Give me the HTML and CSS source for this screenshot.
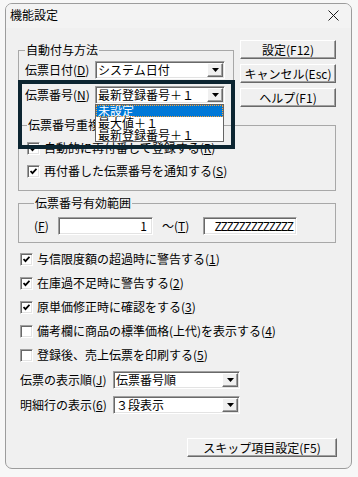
FILE: index.html
```html
<!DOCTYPE html>
<html lang="ja">
<head>
    <meta charset="utf-8">
    <title>機能設定</title>
    <link rel="stylesheet" href="styles.css">
</head>
<body>

<div class="window">
    <div class="title_bar">
        <span class="title">機能設定</span>
        <svg class="close_icon" width="11" height="11" viewBox="0 0 11 11">
            <path d="M0.5 0.5 L10.5 10.5 M10.5 0.5 L0.5 10.5" stroke="#1a1a1a" stroke-width="1" fill="none"/>
        </svg>
    </div>

    <div class="dialog">
        <div class="top_row">
            <fieldset class="group group--auto">
                <legend>自動付与方法</legend>
                <div class="field_row">
                    <span class="field_label">伝票日付(<u>D</u>)</span>
                    <div class="combo">
                        <span class="combo_text">システム日付</span>
                        <span class="combo_button"><svg width="7" height="4" viewBox="0 0 7 4"><path d="M0 0 H7 L3.5 4 Z" fill="#000"/></svg></span>
                    </div>
                </div>
                <div class="field_row">
                    <span class="field_label">伝票番号(<u>N</u>)</span>
                    <div class="combo">
                        <span class="combo_text">最新登録番号＋１</span>
                        <span class="combo_button"><svg width="7" height="4" viewBox="0 0 7 4"><path d="M0 0 H7 L3.5 4 Z" fill="#000"/></svg></span>
                        <ul class="drop_list">
                            <li class="drop_item drop_item--selected">未設定</li>
                            <li class="drop_item">最大値＋１</li>
                            <li class="drop_item">最新登録番号＋１</li>
                        </ul>
                    </div>
                </div>
            </fieldset>

            <div class="button_column">
                <button class="win_button">設定(F12)</button>
                <button class="win_button">キャンセル(Esc)</button>
                <button class="win_button">ヘルプ(F1)</button>
            </div>
        </div>

        <fieldset class="group group--dup">
            <legend>伝票番号重複時の処理</legend>
            <div class="check_row">
                <span class="check_box"><svg width="7" height="7" viewBox="0 0 7 7"><path d="M0.5 3 L2.5 5.2 L6.5 0.8" stroke="#000" stroke-width="1.8" fill="none"/></svg></span>
                <span>自動的に再付番して登録する(<u>R</u>)</span>
            </div>
            <div class="check_row">
                <span class="check_box"><svg width="7" height="7" viewBox="0 0 7 7"><path d="M0.5 3 L2.5 5.2 L6.5 0.8" stroke="#000" stroke-width="1.8" fill="none"/></svg></span>
                <span>再付番した伝票番号を通知する(<u>S</u>)</span>
            </div>
        </fieldset>

        <fieldset class="group group--range">
            <legend>伝票番号有効範囲</legend>
            <div class="range_row">
                <span class="range_label">(<u>F</u>)</span>
                <div class="text_box text_box--from">1</div>
                <span class="range_label range_label--to">〜(<u>T</u>)</span>
                <div class="text_box text_box--to">ZZZZZZZZZZZZZ</div>
            </div>
        </fieldset>

        <div class="check_list">
            <div class="check_row">
                <span class="check_box"><svg width="7" height="7" viewBox="0 0 7 7"><path d="M0.5 3 L2.5 5.2 L6.5 0.8" stroke="#000" stroke-width="1.8" fill="none"/></svg></span>
                <span>与信限度額の超過時に警告する(<u>1</u>)</span>
            </div>
            <div class="check_row">
                <span class="check_box"><svg width="7" height="7" viewBox="0 0 7 7"><path d="M0.5 3 L2.5 5.2 L6.5 0.8" stroke="#000" stroke-width="1.8" fill="none"/></svg></span>
                <span>在庫過不足時に警告する(<u>2</u>)</span>
            </div>
            <div class="check_row">
                <span class="check_box"><svg width="7" height="7" viewBox="0 0 7 7"><path d="M0.5 3 L2.5 5.2 L6.5 0.8" stroke="#000" stroke-width="1.8" fill="none"/></svg></span>
                <span>原単価修正時に確認をする(<u>3</u>)</span>
            </div>
            <div class="check_row">
                <span class="check_box"></span>
                <span>備考欄に商品の標準価格(上代)を表示する(<u>4</u>)</span>
            </div>
            <div class="check_row">
                <span class="check_box"></span>
                <span>登録後、売上伝票を印刷する(<u>5</u>)</span>
            </div>
        </div>

        <div class="select_list">
            <div class="field_row">
                <span class="field_label field_label--wide">伝票の表示順(<u>J</u>)</span>
                <div class="combo combo--wide">
                    <span class="combo_text">伝票番号順</span>
                    <span class="combo_button"><svg width="7" height="4" viewBox="0 0 7 4"><path d="M0 0 H7 L3.5 4 Z" fill="#000"/></svg></span>
                </div>
            </div>
            <div class="field_row">
                <span class="field_label field_label--wide">明細行の表示(<u>6</u>)</span>
                <div class="combo combo--wide">
                    <span class="combo_text">３段表示</span>
                    <span class="combo_button"><svg width="7" height="4" viewBox="0 0 7 4"><path d="M0 0 H7 L3.5 4 Z" fill="#000"/></svg></span>
                </div>
            </div>
        </div>

        <div class="bottom_row">
            <button class="win_button win_button--skip">スキップ項目設定(F5)</button>
        </div>

        <div class="highlight_box"></div>
    </div>
</div>

</body>
</html>
```

FILE: styles.css
```css
body {
    margin: 0;
    padding: 3px 6px 0 5px;
    background-color: #f7f7f7;
    font-family: "Noto Sans CJK JP", "Noto Sans", sans-serif;
    font-size: 12px;
    line-height: 14px;
    color: #000;
}

.window {
    width: 347px;
    height: 466px;
    box-sizing: border-box;
    border: 1px solid #9c9c9c;
    border-radius: 7px;
    background-color: #f0f0f0;
    overflow: hidden;
}

.title_bar {
    height: 24px;
    display: flex;
    align-items: center;
    justify-content: space-between;
    padding: 0 12px 2px 4px;
    box-sizing: border-box;
    background-color: #f3f3f3;
}

.dialog {
    position: relative;
    padding: 12px 15px 0 12px;
}

.top_row {
    display: flex;
    gap: 6px;
    align-items: flex-start;
    height: 72px;
}

/* group boxes */

.group {
    margin: 0;
    min-width: 0;
    box-sizing: border-box;
    border: 1px solid #a8a8a8;
}

.group legend {
    padding: 0 1px;
    line-height: 14px;
}

.group--auto {
    width: 216px;
    margin-top: 3px;
    padding: 4px 7px 8px 6px;
    border-bottom: none;
}

.group--dup {
    margin-top: 6px;
    padding: 8px 8px 11px 8px;
}

.group--range {
    margin-top: 5px;
    padding: 7px 8px 7px 15px;
}

.field_row {
    display: flex;
    align-items: center;
    height: 18px;
}

.field_row + .field_row {
    margin-top: 7px;
}

.field_label {
    width: 70px;
    flex: none;
}

.field_label--wide {
    width: 93px;
}

/* combo boxes */

.combo {
    position: relative;
    width: 130px;
    height: 18px;
    box-sizing: border-box;
    display: flex;
    align-items: center;
    border: 1px solid;
    border-color: #a0a0a0 #ffffff #ffffff #a0a0a0;
    box-shadow: inset 1px 1px 0 #696969, inset -1px -1px 0 #e3e3e3;
    background-color: #fff;
}

.combo--wide {
    width: 127px;
}

.combo_text {
    flex: 1;
    padding-left: 2px;
    white-space: nowrap;
}

.combo_button {
    width: 16px;
    height: 14px;
    margin-right: 1px;
    box-sizing: border-box;
    display: flex;
    align-items: center;
    justify-content: center;
    border: 1px solid;
    border-color: #ffffff #696969 #696969 #ffffff;
    box-shadow: inset -1px -1px 0 #a0a0a0;
    background-color: #f0f0f0;
}

.drop_list {
    position: absolute;
    z-index: 3;
    top: 17px;
    left: -1px;
    width: 129px;
    margin: 0;
    padding: 0;
    list-style: none;
    box-sizing: border-box;
    border: 1px solid #646464;
    background-color: #fff;
}

.drop_item {
    height: 12px;
    line-height: 12px;
    padding-left: 2px;
    white-space: nowrap;
}

.drop_item--selected {
    background-color: #0078d7;
    color: #fff;
    outline: 1px dotted #f5a23c;
    outline-offset: -1px;
}

/* buttons */

.button_column {
    width: 96px;
    display: flex;
    flex-direction: column;
    gap: 5px;
}

.win_button {
    height: 19px;
    padding: 0;
    font-family: inherit;
    font-size: 12px;
    line-height: 14px;
    color: #000;
    border: 1px solid;
    border-color: #ffffff #696969 #696969 #ffffff;
    box-shadow: inset -1px -1px 0 #a0a0a0;
    background-color: #f0f0f0;
}

.bottom_row {
    display: flex;
    justify-content: flex-end;
    margin-top: 24px;
    margin-right: -1px;
}

.win_button--skip {
    width: 150px;
}

/* check boxes */

.check_row {
    display: flex;
    align-items: center;
    gap: 4px;
    height: 16px;
    white-space: nowrap;
}

.check_row + .check_row {
    margin-top: 7px;
}

.check_box {
    width: 13px;
    height: 13px;
    flex: none;
    box-sizing: border-box;
    display: flex;
    align-items: center;
    justify-content: center;
    border: 1px solid;
    border-color: #a0a0a0 #ffffff #ffffff #a0a0a0;
    box-shadow: inset 1px 1px 0 #696969, inset -1px -1px 0 #e3e3e3;
    background-color: #fff;
}

.check_list {
    margin: 8px 0 0 2px;
}

.check_list .check_row + .check_row {
    margin-top: 8px;
}

/* range */

.range_row {
    display: flex;
    align-items: center;
    height: 18px;
}

.range_label {
    width: 24px;
    flex: none;
}

.range_label--to {
    width: 41px;
    margin-left: 9px;
}

.text_box {
    height: 18px;
    box-sizing: border-box;
    padding-right: 5px;
    text-align: right;
    line-height: 16px;
    border: 1px solid;
    border-color: #a0a0a0 #ffffff #ffffff #a0a0a0;
    box-shadow: inset 1px 1px 0 #696969, inset -1px -1px 0 #e3e3e3;
    background-color: #fff;
}

.text_box--from {
    width: 95px;
}

.text_box--to {
    width: 94px;
    padding-right: 3px;
    letter-spacing: -1px;
}

.select_list {
    margin: 8px 0 0 2px;
}

/* annotation frame drawn over the dialog */

.highlight_box {
    position: absolute;
    z-index: 2;
    left: 12px;
    top: 52px;
    width: 217px;
    height: 69px;
    box-sizing: border-box;
    border: 4px solid #0c2531;
    pointer-events: none;
}
```
